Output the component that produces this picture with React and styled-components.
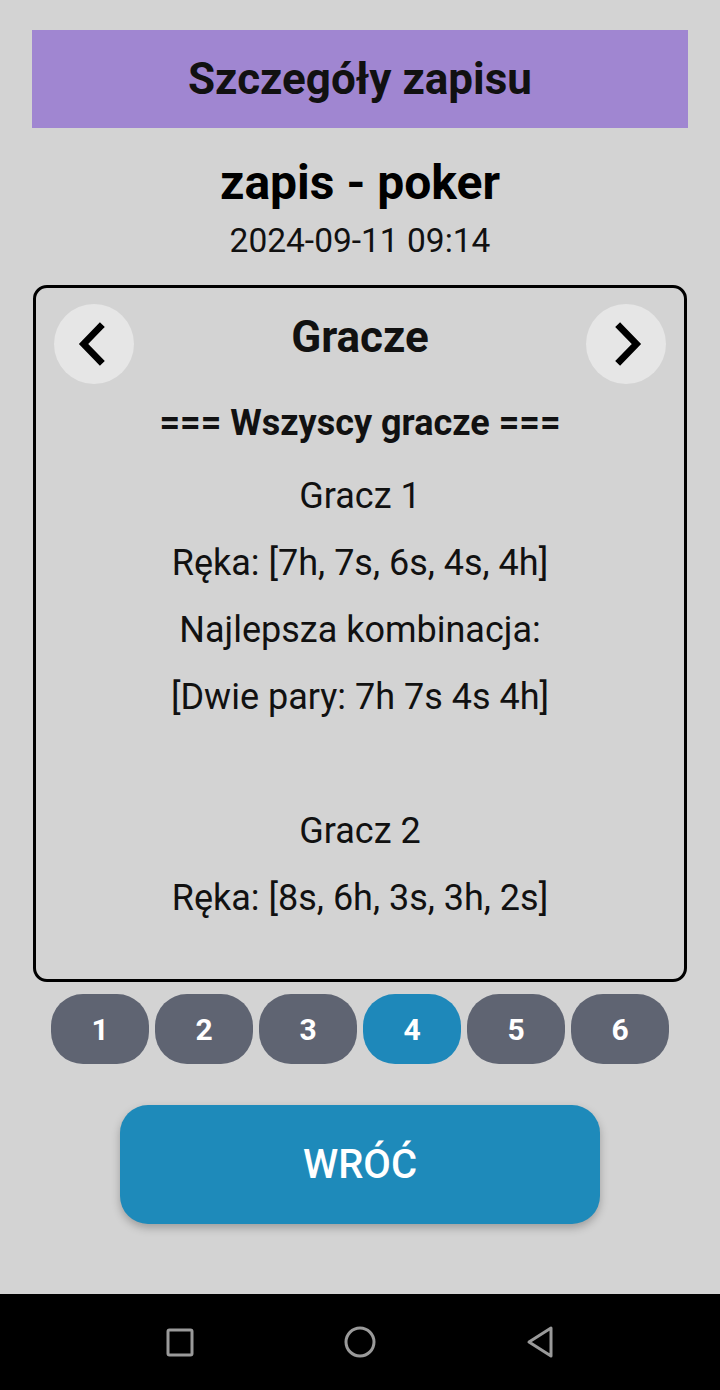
import styled, { createGlobalStyle } from 'styled-components';

const GlobalStyle = createGlobalStyle`
  body {
    margin: 0;
    background: #d3d3d3;
    font-family: Roboto, "Noto Sans", sans-serif;
  }
`;

const Screen = styled.div`
  width: 720px;
  height: 1390px;
  display: flex;
  flex-direction: column;
  background: #d3d3d3;
  overflow: hidden;
`;

const Content = styled.div`
  flex: 1;
  display: flex;
  flex-direction: column;
  align-items: center;
  padding: 30px 32px 0;
`;

const HeaderBar = styled.div`
  align-self: stretch;
  height: 98px;
  background: #a086d1;
  display: flex;
  align-items: center;
  justify-content: center;
  font-size: 44px;
  font-weight: 700;
  color: #111;
`;

const Title = styled.h1`
  margin: 27px 0 0;
  font-size: 48px;
  line-height: 56px;
  font-weight: 700;
  color: #000;
`;

const DateText = styled.div`
  margin-top: 10px;
  font-size: 33.5px;
  line-height: 40px;
  color: #111;
`;

const Card = styled.div`
  align-self: stretch;
  margin: 24px 1px 0;
  height: 697px;
  box-sizing: border-box;
  border: 3px solid #000;
  border-radius: 14px;
  padding: 16px 18px 0;
  overflow: hidden;
  display: flex;
  flex-direction: column;
`;

const CardHead = styled.div`
  display: flex;
  align-items: center;
  justify-content: space-between;
  height: 80px;
`;

const CardTitle = styled.div`
  font-size: 44px;
  font-weight: 700;
  color: #111;
  margin-top: -14px;
`;

const NavButton = styled.button`
  width: 80px;
  height: 80px;
  border-radius: 50%;
  border: none;
  background: #e6e6e6;
  display: flex;
  align-items: center;
  justify-content: center;
  padding: 0;
  cursor: pointer;
`;

const Heading = styled.div`
  margin-top: 14px;
  text-align: center;
  font-size: 36px;
  line-height: 50px;
  font-weight: 700;
  color: #111;
`;

const Lines = styled.div`
  margin-top: 15px;
  display: flex;
  flex-direction: column;
  align-items: center;
`;

const Line = styled.div`
  font-size: 36px;
  line-height: 67px;
  height: 67px;
  color: #111;
  white-space: nowrap;
`;

const Pager = styled.div`
  margin-top: 12px;
  display: flex;
  gap: 6px;
`;

const Page = styled.button`
  width: 98px;
  height: 70px;
  border: none;
  border-radius: 32px;
  background: ${(p) => (p.$active ? '#1e88ba' : '#5f6472')};
  color: #fff;
  font-family: Roboto, sans-serif;
  font-size: 30px;
  font-weight: 700;
  cursor: pointer;
`;

const BackButton = styled.button`
  margin-top: 41px;
  width: 480px;
  height: 119px;
  border: none;
  border-radius: 28px;
  background: #1e8aba;
  color: #fff;
  font-family: Roboto, sans-serif;
  font-size: 40px;
  font-weight: 500;
  box-shadow: 0 4px 8px rgba(0, 0, 0, 0.25);
  cursor: pointer;
`;

const NavBar = styled.div`
  height: 96px;
  background: #000;
  display: flex;
  align-items: center;
  justify-content: center;
  gap: 148px;
`;

const Chevron = ({ dir }) => (
  <svg width="48" height="48" viewBox="0 0 24 24" fill="none" stroke="#000" strokeWidth="3.4" strokeLinecap="square">
    {dir === 'left' ? <path d="M15 3.5 L6.8 12 L15 20.5" /> : <path d="M9 3.5 L17.2 12 L9 20.5" />}
  </svg>
);

const lines = [
  'Gracz 1',
  'Ręka: [7h, 7s, 6s, 4s, 4h]',
  'Najlepsza kombinacja:',
  '[Dwie pary: 7h 7s 4s 4h]',
  '',
  'Gracz 2',
  'Ręka: [8s, 6h, 3s, 3h, 2s]',
];

export default function App() {
  return (
    <>
      <GlobalStyle />
      <Screen>
        <Content>
          <HeaderBar>Szczegóły zapisu</HeaderBar>
          <Title>zapis - poker</Title>
          <DateText>2024-09-11 09:14</DateText>
          <Card>
            <CardHead>
              <NavButton><Chevron dir="left" /></NavButton>
              <CardTitle>Gracze</CardTitle>
              <NavButton><Chevron dir="right" /></NavButton>
            </CardHead>
            <Heading>=== Wszyscy gracze ===</Heading>
            <Lines>
              {lines.map((l, i) => (
                <Line key={i}>{l}</Line>
              ))}
            </Lines>
          </Card>
          <Pager>
            {[1, 2, 3, 4, 5, 6].map((n) => (
              <Page key={n} $active={n === 4}>{n}</Page>
            ))}
          </Pager>
          <BackButton>WRÓĆ</BackButton>
        </Content>
        <NavBar>
          <svg width="30" height="30" viewBox="0 0 30 30">
            <rect x="3" y="3" width="24" height="25" rx="1.5" fill="none" stroke="#9a9a9a" strokeWidth="3" />
          </svg>
          <svg width="34" height="34" viewBox="0 0 34 34">
            <circle cx="17" cy="17" r="14" fill="none" stroke="#9a9a9a" strokeWidth="3" />
          </svg>
          <svg width="30" height="34" viewBox="0 0 30 34">
            <path d="M26 3 L26 31 L4 17 Z" fill="none" stroke="#9a9a9a" strokeWidth="3" strokeLinejoin="round" />
          </svg>
        </NavBar>
      </Screen>
    </>
  );
}
